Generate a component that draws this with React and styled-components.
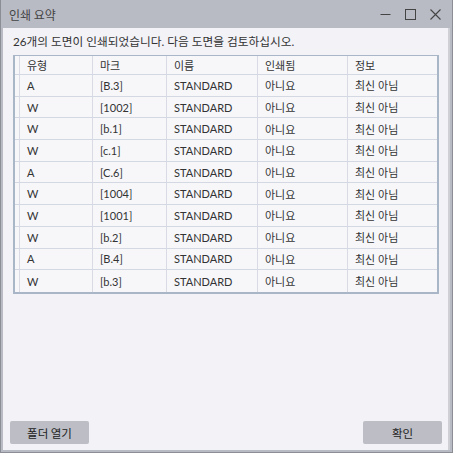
import React from "react";
import styled, { createGlobalStyle } from "styled-components";

const Global = createGlobalStyle`
  html, body { margin: 0; padding: 0; background: #b9bbc4; }
  body { font-family: Lato, "Noto Sans CJK KR", sans-serif; }
`;

const Window = styled.div`
  width: 453px;
  height: 453px;
  box-sizing: border-box;
  background: #b9bbc4;
  border: 1px solid #8c8e96;
  border-top: none;
  display: flex;
  flex-direction: column;
`;

const TitleBar = styled.div`
  height: 28px;
  display: flex;
  align-items: center;
  padding-left: 8px;
  color: #444;
  font-size: 12px;
  font-family: "Noto Sans CJK KR", sans-serif;
`;

const Title = styled.div`
  flex: 1;
`;

const Ctrl = styled.div`
  width: 25px;
  height: 28px;
  display: flex;
  align-items: center;
  justify-content: center;
  margin-right: ${(p) => p.$mr || 0}px;
`;

const Body = styled.div`
  flex: 1;
  margin: 0 2px 2px 2px;
  background: #f2f2f7;
  border-right: 2px solid #cfd0d6;
  display: flex;
  flex-direction: column;
  padding: 4px 6px 6px 10px;
`;

const Message = styled.div`
  font-size: 11.7px;
  color: #333;
  font-family: Lato, "Noto Sans CJK KR", sans-serif;
  height: 20px;
  line-height: 18px;
  margin-bottom: 3px;
`;

const Table = styled.div`
  width: 426px;
  box-sizing: border-box;
  border: 2px solid #a8b6c8;
  border-top-width: 1px;
  background: #f7f7fa;
  display: flex;
  flex-direction: column;
`;

const Row = styled.div`
  display: grid;
  grid-template-columns: 5px 73px 74px 91px 90px 1fr;
  height: ${(p) => (p.$head ? 19 : 21.7)}px;
  border-bottom: ${(p) => (p.$last ? "none" : "1px solid #d4d8e2")};
  box-sizing: border-box;
`;

const Cell = styled.div`
  border-right: ${(p) => (p.$end ? "none" : "1px solid #d8dbe3")};
  padding-left: 7px;
  font-size: 11px;
  color: #333;
  display: flex;
  align-items: center;
  white-space: nowrap;
  font-family: Lato, "Noto Sans CJK KR", sans-serif;
`;

const Lead = styled.div`
  border-right: 1px solid #d8dbe3;
`;

const Spacer = styled.div`
  flex: 1;
`;

const Footer = styled.div`
  display: flex;
  justify-content: space-between;
  margin-left: -3px;
`;

const Button = styled.button`
  width: 79px;
  height: 23px;
  border: none;
  border-radius: 2px;
  background: #bcbdc5;
  color: #222;
  font-size: 11.5px;
  font-family: "Noto Sans CJK KR", sans-serif;
  padding: 0;
`;

const rows = [
  ["A", "[B.3]"],
  ["W", "[1002]"],
  ["W", "[b.1]"],
  ["W", "[c.1]"],
  ["A", "[C.6]"],
  ["W", "[1004]"],
  ["W", "[1001]"],
  ["W", "[b.2]"],
  ["A", "[B.4]"],
  ["W", "[b.3]"],
];

const headers = ["유형", "마크", "이름", "인쇄됨", "정보"];

export default function App() {
  return (
    <>
      <Global />
      <Window>
        <TitleBar>
          <Title>인쇄 요약</Title>
          <Ctrl>
            <svg width="11" height="11" viewBox="0 0 11 11">
              <path d="M0.5 5.5h10" stroke="#444" strokeWidth="1" />
            </svg>
          </Ctrl>
          <Ctrl>
            <svg width="11" height="11" viewBox="0 0 11 11">
              <rect x="0.5" y="0.5" width="10" height="10" fill="none" stroke="#444" strokeWidth="1" />
            </svg>
          </Ctrl>
          <Ctrl $mr={4}>
            <svg width="11" height="11" viewBox="0 0 11 11">
              <path d="M0.5 0.5l10 10M10.5 0.5l-10 10" stroke="#444" strokeWidth="1.1" />
            </svg>
          </Ctrl>
        </TitleBar>
        <Body>
          <Message>26개의 도면이 인쇄되었습니다. 다음 도면을 검토하십시오.</Message>
          <Table>
            <Row $head>
              <Lead />
              {headers.map((h, i) => (
                <Cell key={h} $end={i === 4}>
                  {h}
                </Cell>
              ))}
            </Row>
            {rows.map((r, i) => (
              <Row key={i} $last={i === rows.length - 1}>
                <Lead />
                <Cell>{r[0]}</Cell>
                <Cell>{r[1]}</Cell>
                <Cell>STANDARD</Cell>
                <Cell>아니요</Cell>
                <Cell $end>최신 아님</Cell>
              </Row>
            ))}
          </Table>
          <Spacer />
          <Footer>
            <Button>폴더 열기</Button>
            <Button>확인</Button>
          </Footer>
        </Body>
      </Window>
    </>
  );
}
